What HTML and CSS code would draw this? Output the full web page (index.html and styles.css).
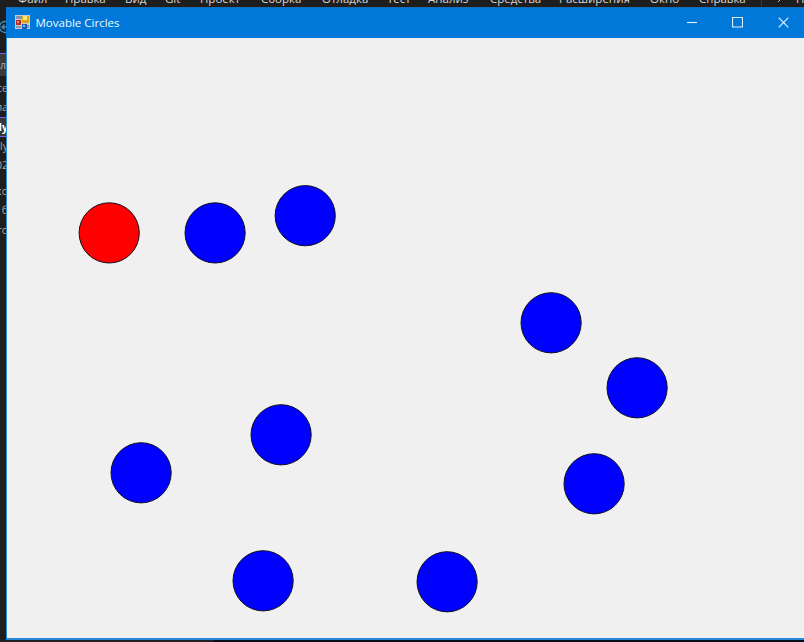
FILE: index.html
```html
<!DOCTYPE html>
<html lang="ru">
<head>
<meta charset="utf-8">
<title>Movable Circles</title>
<link rel="stylesheet" href="styles.css">
</head>
<body>
<div class="ide">
  <nav class="menu">
    <span>Файл</span><span>Правка</span><span>Вид</span><span>Git</span><span>Проект</span><span>Сборка</span><span>Отладка</span><span>Тест</span><span>Анализ</span><span>Средства</span><span>Расширения</span><span>Окно</span><span>Справка</span><i class="divider"></i><svg class="search" viewBox="0 0 10 10"><path d="M1 9 6 4"/><circle cx="7" cy="3" r="3"/></svg><span>По</span>
  </nav>
  <aside class="side">
    <svg class="back" viewBox="0 0 12 14"><circle cx="6" cy="7" r="5.5"/><path d="M9 7H3M5.500 4.500 3 7 5.500 9.500"/></svg>
    <div class="tab"><span>л</span></div>
    <span class="row">се</span>
    <span class="row">ла</span>
    <div class="selected"><span>ly</span></div>
    <span class="row">ly</span>
    <span class="row">02</span>
    <span class="row spaced">ко</span>
    <span class="row">б</span>
    <span class="row low">то</span>
  </aside>
  <div class="status"></div>
</div>
<main class="window">
  <header class="titlebar">
    <svg class="appicon" viewBox="0 0 15 15">
      <path fill="#c9cdd2" d="M0 0h15v14H0z"/>
      <path fill="#8296b5" d="M1 1h6v3H1zM1 11h5v2H1zM12 10h2v3h-2z"/>
      <path fill="#b52b25" d="M1 5h5v5H1z"/><path fill="#e88a7d" d="M2 6h2v2H2z"/>
      <path fill="#dda510" d="M7 1h7v7H7z"/><path fill="#ffe574" d="M8 1h4v4H8z"/>
      <path fill="#2459bd" d="M7 9h5v5H7z"/><path fill="#82b5ef" d="M8 10h2v2H8z"/>
    </svg>
    <h1>Movable Circles</h1>
    <div class="controls">
      <svg viewBox="0 0 11 11"><path d="M1 5.500h10"/></svg>
      <svg viewBox="0 0 11 11"><path d="M.5.5h10v9.500H.5z"/></svg>
      <svg viewBox="0 0 11 11"><path d="m.7.7 9.600 9.600M10.300.7.7 10.300"/></svg>
    </div>
  </header>
  <svg class="canvas" viewBox="7 38 797 600">
    <circle class="active" cx="109.200" cy="232.900" r="30.100"/>
    <circle cx="215.100" cy="232.900" r="30.100"/>
    <circle cx="305.200" cy="215.700" r="30.100"/>
    <circle cx="551.100" cy="322.800" r="30.100"/>
    <circle cx="637.100" cy="387.800" r="30.100"/>
    <circle cx="594.100" cy="483.800" r="30.100"/>
    <circle cx="281.100" cy="434.800" r="30.100"/>
    <circle cx="141.100" cy="472.800" r="30.100"/>
    <circle cx="263.100" cy="580.800" r="30.100"/>
    <circle cx="447.100" cy="581.800" r="30.100"/>
  </svg>
</main>
</body>
</html>
```
FILE: styles.css
```css
* { box-sizing: border-box; }
body { margin: 0; width: 804px; height: 642px; overflow: hidden; position: relative; background: #1e1e1e; font-family: "Open Sans", sans-serif; }
.ide { height: 642px; display: grid; grid-template-rows: 7px 632px 3px; }
.menu {
  display: grid;
  grid-template-columns: 47px 60px 40px 35px 61px 61px 65px 41px 62px 69px 91px 49px 60px 18px 19px 30px;
  padding-left: 18px; overflow: hidden; height: 7px;
  color: #d6d6d6; font-size: 11.500px; line-height: 16px; white-space: nowrap;
}
.menu span { margin-top: -9px; }
.divider { width: 1px; height: 6px; background: #3d3d3d; margin-left: 2px; }
.search { width: 10px; height: 10px; margin-top: -7px; fill: none; stroke: #bbb; }
.side { width: 6px; overflow: hidden; display: flex; flex-direction: column; color: #aaa; font-size: 10.500px; }
.back { width: 12px; height: 14px; margin: 13px 0 19px -1px; flex: none; fill: none; stroke: #3f93c8; stroke-width: 1.300; }
.tab, .selected { display: flex; justify-content: flex-end; width: 6px; flex: none; }
.tab { height: 23px; border-top: 1px solid #7160e8; background: #3b3b3f; line-height: 23px; }
.row, .selected span { margin-right: -2px; }
.row { flex: none; align-self: flex-end; height: 19px; line-height: 19px; }
.tab + .row { margin-top: 3px; }
.selected { height: 20px; line-height: 18px; background: #37373b; border-top: 1px solid #7160e8; border-bottom: 1px solid #7160e8; color: #fff; font-weight: bold; }
.spaced { margin-top: 7px; }
.low { margin-top: 1px; }
.status { background: linear-gradient(90deg, #1f2022 0 213px, #03101a 215px); }
.window { position: absolute; left: 6px; top: 7px; width: 798px; height: 633px; display: flex; flex-direction: column; background: #f0f0f0; border: solid #2889d8; border-width: 0 0 2px 1px; }
.titlebar { height: 31px; flex: none; display: flex; align-items: center; padding-left: 8px; background: #0078d9; border-top: 1px solid #146eb8; margin-left: -1px; }
.appicon { width: 15px; height: 15px; margin-left: 1px; margin-top: -1px; }
h1 { margin: 0 0 0 5.500px; color: #f0f8ff; font-size: 11.500px; font-weight: 400; line-height: 16px; }
.controls { margin-left: auto; margin-right: 15px; margin-top: -1px; display: flex; gap: 35px; }
.controls svg { width: 11px; height: 11px; fill: none; stroke: #e4f2ff; stroke-width: 1.150; }
.canvas { width: 797px; height: 600px; flex: none; }
.canvas circle { fill: #00f; stroke: #101020; stroke-width: 1; }
.canvas .active { fill: #f00; }
```
